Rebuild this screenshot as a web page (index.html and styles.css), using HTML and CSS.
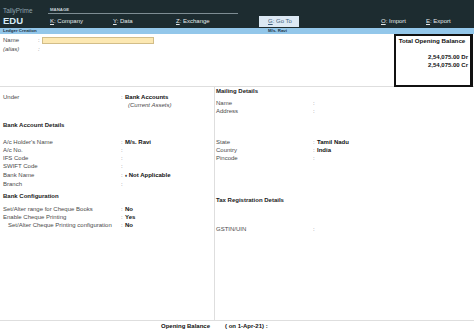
FILE: index.html
```html
<!DOCTYPE html>
<html lang="en">
<head>
    <meta charset="UTF-8">
    <meta name="viewport" content="width=device-width, initial-scale=1.0">
    <title>TallyPrime - Ledger Creation</title>
    <link rel="stylesheet" href="styles.css">
</head>
<body>
    <header class="topbar">
        <div class="brand">
            <div class="product">TallyPrime</div>
            <div class="edition">EDU</div>
        </div>
        <nav class="menu">
            <div class="menu-title">MANAGE</div>
            <div class="menu-items">
                <div class="menu-item"><u>K</u>: Company</div>
                <div class="menu-item"><u>Y</u>: Data</div>
                <div class="menu-item wide"><u>Z</u>: Exchange</div>
                <div class="menu-item goto"><u>G</u>: Go To</div>
                <div class="menu-item short"><u>O</u>: Import</div>
                <div class="menu-item short"><u>E</u>: Export</div>
                <div class="menu-item edge"></div>
            </div>
        </nav>
    </header>

    <div class="subbar">
        <span>Ledger Creation</span>
        <span>M/s. Ravi</span>
    </div>

    <section class="head-section">
        <div class="name-form">
            <div class="name-row">
                <span class="name-label">Name</span>
                <span class="sep">:</span>
                <span class="name-input"></span>
            </div>
            <div class="name-row alias">
                <span class="name-label">(alias)</span>
                <span class="sep">:</span>
            </div>
        </div>
        <div class="balance-box">
            <div class="balance-title">Total Opening Balance</div>
            <div class="balance-amount first">2,54,075.00 Dr</div>
            <div class="balance-amount">2,54,075.00 Cr</div>
        </div>
    </section>

    <main class="details">
        <div class="col left">
            <div class="row">
                <span class="label">Under</span><span class="sep">:</span><span class="value">Bank Accounts</span>
            </div>
            <div class="row">
                <span class="label"></span><span class="sep"></span><span class="note">(Current Assets)</span>
            </div>

            <div class="heading bank-head">Bank Account Details</div>
            <div class="row">
                <span class="label">A/c Holder's Name</span><span class="sep">:</span><span class="value">M/s. Ravi</span>
            </div>
            <div class="row">
                <span class="label">A/c No.</span><span class="sep">:</span>
            </div>
            <div class="row">
                <span class="label">IFS Code</span><span class="sep">:</span>
            </div>
            <div class="row">
                <span class="label">SWIFT Code</span><span class="sep">:</span>
            </div>
            <div class="row">
                <span class="label">Bank Name</span><span class="sep">:</span><span class="value"><span class="diamond">&#9830;</span> Not Applicable</span>
            </div>
            <div class="row">
                <span class="label">Branch</span><span class="sep">:</span>
            </div>

            <div class="heading config-head">Bank Configuration</div>
            <div class="row">
                <span class="label">Set/Alter range for Cheque Books</span><span class="sep">:</span><span class="value">No</span>
            </div>
            <div class="row">
                <span class="label">Enable Cheque Printing</span><span class="sep">:</span><span class="value">Yes</span>
            </div>
            <div class="row">
                <span class="label indent">Set/Alter Cheque Printing configuration</span><span class="sep">:</span><span class="value">No</span>
            </div>
        </div>

        <div class="col right">
            <div class="heading">Mailing Details</div>
            <div class="mailing">
                <div class="row">
                    <span class="label">Name</span><span class="sep">:</span>
                </div>
                <div class="row">
                    <span class="label">Address</span><span class="sep">:</span>
                </div>
            </div>
            <div class="address">
                <div class="row">
                    <span class="label">State</span><span class="sep">:</span><span class="value">Tamil Nadu</span>
                </div>
                <div class="row">
                    <span class="label">Country</span><span class="sep">:</span><span class="value">India</span>
                </div>
                <div class="row">
                    <span class="label">Pincode</span><span class="sep">:</span>
                </div>
            </div>
            <div class="heading tax-head">Tax Registration Details</div>
            <div class="row gstin">
                <span class="label">GSTIN/UIN</span><span class="sep">:</span>
            </div>
        </div>
    </main>

    <footer class="footer">
        <span class="footer-label">Opening Balance</span>
        <span>( on 1-Apr-21) :</span>
    </footer>
</body>
</html>
```

FILE: styles.css
```css
body {
    margin: 0;
    width: 474px;
    height: 332px;
    overflow: hidden;
    display: flex;
    flex-direction: column;
    background: #fff;
    font-family: "Liberation Sans", Arial, sans-serif;
    font-size: 6px;
    line-height: 8.2px;
    color: #4a4a4a;
}
u {
    text-decoration: underline;
}

/* top bar */
.topbar {
    height: 28px;
    flex: none;
    display: flex;
    background: #1d2c30;
    overflow: hidden;
}
.brand {
    width: 45px;
    padding-left: 3px;
    flex: none;
}
.product {
    padding-top: 7px;
    line-height: 8px;
    font-size: 6.4px;
    color: #8fa4ae;
}
.edition {
    line-height: 11px;
    font-size: 9.5px;
    font-weight: bold;
    color: #d6ebf7;
}
.menu {
    flex: none;
    width: 426px;
}
.menu-title {
    width: 188px;
    padding: 7px 0 0 2px;
    line-height: 6px;
    font-size: 4.3px;
    font-weight: bold;
    color: #c9d3d8;
    border-bottom: 1px solid #7e8d93;
}
.menu-items {
    display: flex;
    padding-left: 2px;
    white-space: nowrap;
}
.menu-item {
    width: 63px;
    flex: none;
    margin-top: 2px;
    height: 11px;
    line-height: 11px;
    font-size: 6px;
    color: #e3e9eb;
}
.menu-item.wide {
    width: 83px;
}
.menu-item.goto {
    width: 31px;
    padding-left: 9px;
    margin-right: 82px;
    background: #dce9f4;
    color: #3f5f7e;
}
.menu-item.short {
    width: 45px;
}
.menu-item.edge {
    width: 3px;
    height: 1px;
    margin-top: 25px;
    background: #e3e9eb;
}

/* title bar */
.subbar {
    height: 6px;
    flex: none;
    display: grid;
    grid-template-columns: 265px 1fr;
    padding-left: 3px;
    background: #93c7ea;
    font-size: 4.4px;
    line-height: 6px;
    font-weight: bold;
    color: #1c3446;
}

/* name and balance */
.head-section {
    height: 52px;
    flex: none;
    display: flex;
    justify-content: space-between;
    border-bottom: 1px solid #dedede;
    padding-right: 1px;
}
.name-form {
    padding: 2px 0 0 3px;
}
.name-row {
    display: flex;
    align-items: center;
    height: 8px;
    line-height: 8px;
}
.name-row.alias {
    margin-top: 1px;
    font-style: italic;
}
.name-label {
    width: 35px;
}
.name-row .sep {
    width: 4px;
}
.name-input {
    width: 112px;
    height: 7px;
    box-sizing: border-box;
    background: #fce8b2;
    border: 1px solid #d2bd88;
}
.balance-box {
    width: 72px;
    border: 2px solid #111;
    border-right-width: 3px;
    padding: 1px 2px 0 0;
    margin-bottom: -1px;
    color: #111;
    font-weight: bold;
    text-align: right;
}
.balance-title {
    text-align: center;
    font-size: 6.2px;
}
.balance-amount.first {
    margin-top: 8px;
}

/* details */
.details {
    flex: 1;
    display: grid;
    grid-template-columns: 215px 1fr;
}
.col.left {
    border-right: 1px solid #dedede;
    padding: 6px 0 0 3px;
}
.col.right {
    padding: 0.4px 0 0 1px;
}
.row {
    display: flex;
    white-space: nowrap;
}
.label {
    width: 118px;
    flex: none;
}
.right .label {
    width: 97px;
}
.label.indent {
    padding-left: 5px;
    width: 113px;
}
.sep {
    width: 4px;
    flex: none;
    color: #666;
}
.value {
    font-weight: bold;
    color: #111;
}
.note {
    padding-left: 3px;
    font-style: italic;
}
.diamond {
    font-size: 4px;
}
.heading {
    font-weight: bold;
    color: #222;
}
.bank-head {
    margin: 11.6px 0 8.5px;
}
.config-head {
    margin: 4px 0 4.8px;
}
.mailing {
    margin-top: 3.3px;
}
.address {
    margin-top: 22.3px;
}
.tax-head {
    margin-top: 33.4px;
}
.gstin {
    margin-top: 21px;
}

/* footer */
.footer {
    height: 11px;
    flex: none;
    border-top: 1px solid #dedede;
    padding-left: 161px;
    line-height: 11px;
    font-weight: bold;
    color: #111;
    display: flex;
}
.footer-label {
    width: 64px;
}
```
